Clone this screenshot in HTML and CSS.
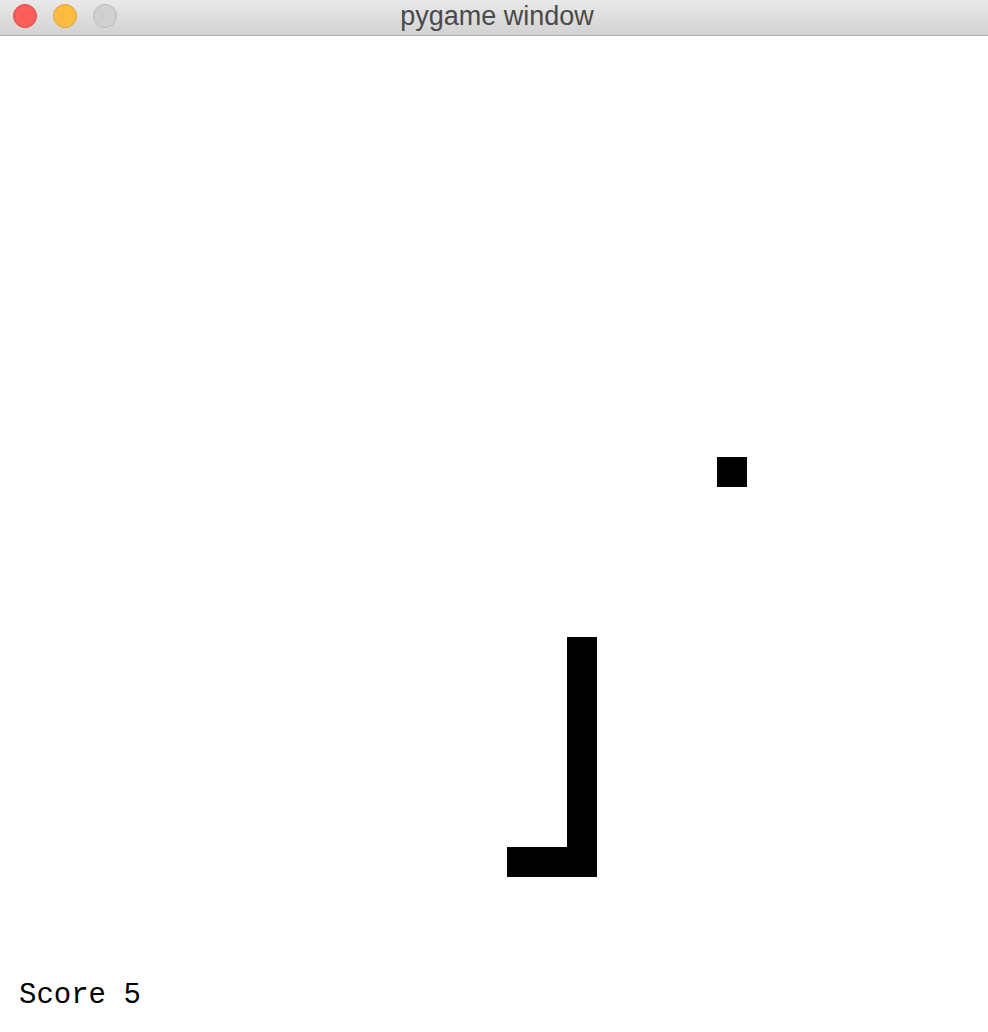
FILE: index.html
```html
<!DOCTYPE html>
<html>
<head>
<meta charset="utf-8">
<title>pygame window</title>
<link rel="stylesheet" href="styles.css">
</head>
<body>
<div class="window">
  <header class="titlebar">
    <div class="lights">
      <span class="light red"></span>
      <span class="light yellow"></span>
      <span class="light gray"></span>
    </div>
    <div class="title">pygame window</div>
  </header>
  <main class="game">
    <div class="cell food"></div>
    <div class="cell snake-v"></div>
    <div class="cell snake-h"></div>
    <div class="score">Score 5</div>
  </main>
</div>
</body>
</html>
```
FILE: styles.css
```css
html, body {
  margin: 0;
  padding: 0;
  background: #ffffff;
}
.window {
  width: 988px;
  height: 1032px;
  display: flex;
  flex-direction: column;
  overflow: hidden;
}
.titlebar {
  height: 35px;
  flex: 0 0 35px;
  border-bottom: 1px solid #b1b1b1;
  background: linear-gradient(to bottom, #e9e9e9, #d2d2d2);
  position: relative;
  display: flex;
  align-items: flex-start;
}
.lights {
  display: flex;
  gap: 16px;
  padding-left: 13px;
  padding-top: 4px;
  position: relative;
  z-index: 1;
}
.light {
  width: 24px;
  height: 24px;
  border-radius: 50%;
  box-sizing: border-box;
  display: block;
}
.red { background: #fc5f57; border: 1px solid #df4744; }
.yellow { background: #fdbc40; border: 1px solid #de9f33; }
.gray { background: #d0d0d0; border: 1px solid #b9b9b9; }
.title {
  position: absolute;
  left: 0;
  right: 0;
  top: 0;
  bottom: 0;
  display: flex;
  align-items: center;
  justify-content: center;
  font-family: "Liberation Sans", Arial, sans-serif;
  font-size: 27px;
  color: #4a4a4a;
  padding-left: 6px;
  padding-bottom: 2px;
}
.game {
  flex: 1;
  position: relative;
  background: #ffffff;
}
.cell {
  position: absolute;
  background: #000000;
}
.food { left: 717px; top: 421px; width: 30px; height: 30px; }
.snake-v { left: 567px; top: 601px; width: 30px; height: 240px; }
.snake-h { left: 507px; top: 811px; width: 90px; height: 30px; }
.score {
  position: absolute;
  left: 19px;
  top: 944px;
  font-family: "Liberation Mono", "Courier New", monospace;
  font-size: 29px;
  line-height: 32px;
  color: #000;
}
```
